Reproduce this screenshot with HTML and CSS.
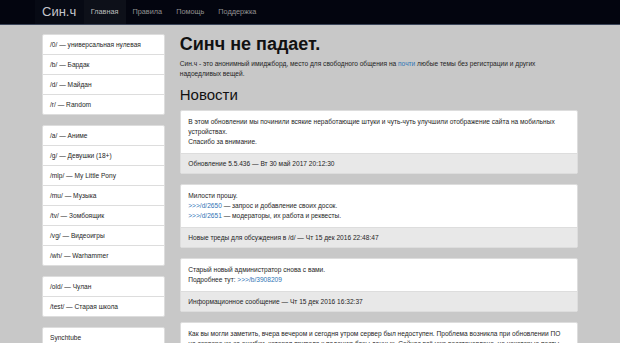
FILE: index.html
```html
<!doctype html>
<html lang="ru">
<head>
	<meta charset="utf-8">
	<title>Син.ч</title>
	<link rel="stylesheet" href="styles.css">
</head>
<body>
	<div class="navbar">
		<a class="brand" href="/">Син.ч</a>
		<a class="nav-link active" href="/">Главная</a>
		<a class="nav-link" href="/rules">Правила</a>
		<a class="nav-link" href="/help">Помощь</a>
		<a class="nav-link" href="/support">Поддержка</a>
	</div>

	<div class="page">
		<div class="sidebar">
			<div class="list-group">
				<a class="list-item" href="/0/">/0/ — универсальная нулевая</a>
				<a class="list-item" href="/b/">/b/ — Бардак</a>
				<a class="list-item" href="/d/">/d/ — Майдан</a>
				<a class="list-item" href="/r/">/r/ — Random</a>
			</div>
			<div class="list-group">
				<a class="list-item" href="/a/">/a/ — Аниме</a>
				<a class="list-item" href="/g/">/g/ — Девушки (18+)</a>
				<a class="list-item" href="/mlp/">/mlp/ — My Little Pony</a>
				<a class="list-item" href="/mu/">/mu/ — Музыка</a>
				<a class="list-item" href="/tv/">/tv/ — Зомбоящик</a>
				<a class="list-item" href="/vg/">/vg/ — Видеоигры</a>
				<a class="list-item" href="/wh/">/wh/ — Warhammer</a>
			</div>
			<div class="list-group">
				<a class="list-item" href="/old/">/old/ — Чулан</a>
				<a class="list-item" href="/test/">/test/ — Старая школа</a>
			</div>
			<div class="list-group">
				<a class="list-item" href="/synch">Synchtube</a>
				<a class="list-item" href="/irc">IRC</a>
			</div>
		</div>

		<div class="main">
			<h1>Синч не падает.</h1>
			<p class="intro">Син.ч - это анонимный имиджборд, место для свободного общения на <a href="#">почти</a> любые темы без регистрации и других надоедливых вещей.</p>
			<h2>Новости</h2>

			<div class="panel">
				<div class="panel-body">В этом обновлении мы починили всякие неработающие штуки и чуть-чуть улучшили отображение сайта на мобильных устройствах.<br>Спасибо за внимание.</div>
				<div class="panel-footer">Обновление 5.5.436 — Вт 30 май 2017 20:12:30</div>
			</div>

			<div class="panel">
				<div class="panel-body">Милости прошу.<br><a href="#">&gt;&gt;&gt;/d/2650</a> — запрос и добавление своих досок.<br><a href="#">&gt;&gt;&gt;/d/2651</a> — модераторы, их работа и реквесты.</div>
				<div class="panel-footer">Новые треды для обсуждения в /d/ — Чт 15 дек 2016 22:48:47</div>
			</div>

			<div class="panel">
				<div class="panel-body">Старый новый администратор снова с вами.<br>Подробнее тут: <a href="#">&gt;&gt;&gt;/b/3908209</a></div>
				<div class="panel-footer">Информационное сообщение — Чт 15 дек 2016 16:32:37</div>
			</div>

			<div class="panel">
				<div class="panel-body">Как вы могли заметить, вчера вечером и сегодня утром сервер был недоступен. Проблема возникла при обновлении ПО<br>на сервере из-за ошибки, которая привела к падению базы данных. Сейчас всё уже восстановлено, но некоторые посты могли пропасть.</div>
				<div class="panel-footer">Техническое сообщение — Пн 12 дек 2016 11:04:10</div>
			</div>
		</div>
	</div>
</body>
</html>
```

FILE: styles.css
```css
*{ box-sizing: border-box; }
body{
	margin: 0; background-color: #c8c8c8;
	font-family: "Liberation Sans", Arial, sans-serif;
	font-size: 6.6px; line-height: 10px; color: #1e1e1e; }
a{ color: #2f74b5; text-decoration: none; }

.navbar{
	display: flex; align-items: stretch;
	height: 25px; padding: 0 34.5px;
	background-color: #03050f; border-bottom: 1px solid #3a4458;
	margin-bottom: 9px; }
.brand{
	display: flex; align-items: center;
	padding: 0 7.5px; font-size: 13px; color: #c4c6cc;
	background-color: #070a14; }
.nav-link{
	display: flex; align-items: center;
	padding: 0 7px; font-size: 7.3px; color: #929292; }
.nav-link.active{
	background-color: #0d1019; color: #bdbdbd; }

.page{
	display: grid; grid-template-columns: 122.75px 398.25px;
	gap: 15px; padding: 0 42px; }

.list-group{
	display: flex; flex-direction: column;
	margin-bottom: 10px; }
.list-item{
	display: block; background-color: #fff; color: #1e1e1e;
	border: 1px solid #ddd; margin-bottom: -1px;
	padding: 4.5px 7px; }
.list-item:first-child{ border-radius: 2px 2px 0 0; }
.list-item:last-child{ border-radius: 0 0 2px 2px; margin-bottom: 0; }

.main{ min-width: 0; }
.main h1{
	margin: 0 0 5px; font-size: 18px; line-height: 20px;
	font-weight: bold; color: #111; }
.intro{ margin: 0 0 8px; }
.main h2{
	margin: 0 0 6.5px; font-size: 15px; line-height: 16.5px;
	font-weight: normal; color: #111; }

.panel{
	background-color: #fff; border: 1px solid #ddd;
	border-radius: 2px; margin-bottom: 10px; }
.panel-body{ padding: 6px 7.5px; }
.panel-footer{
	background-color: #e8e8e8; border-top: 1px solid #ddd;
	padding: 4.5px 7.5px; }
```
